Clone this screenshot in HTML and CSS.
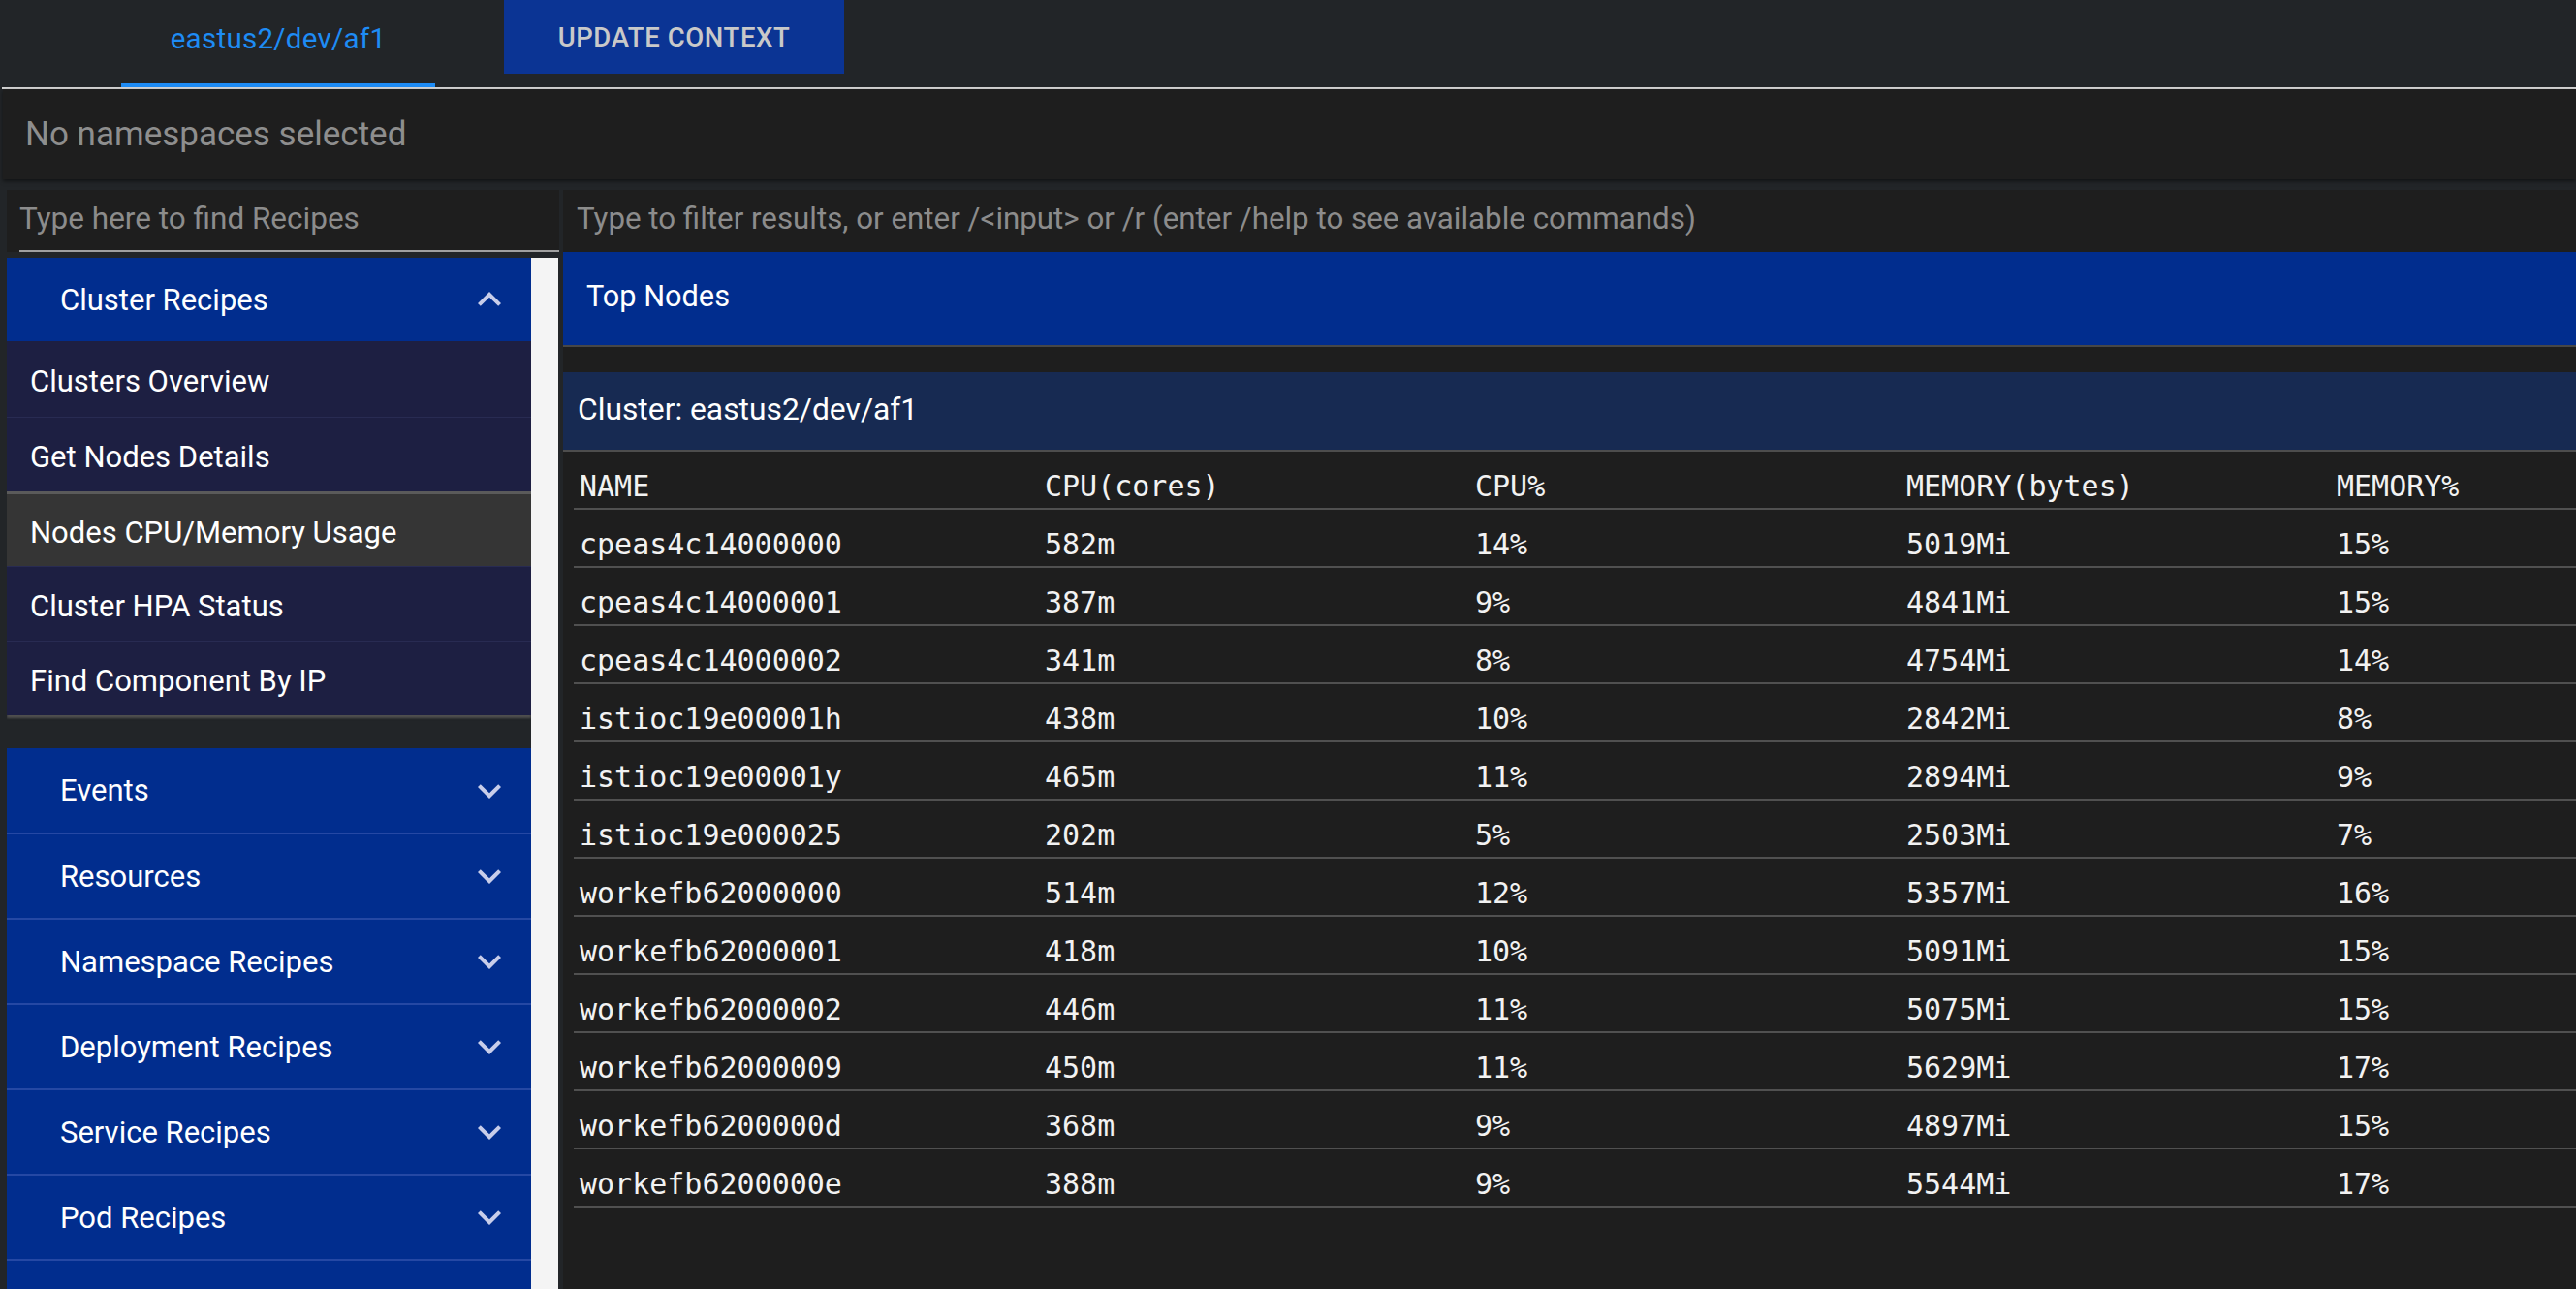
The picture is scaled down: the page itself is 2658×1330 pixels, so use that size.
FILE: index.html
```html
<!DOCTYPE html>
<html lang="en">
<head>
<meta charset="utf-8">
<title>Recipes</title>
<link rel="stylesheet" href="styles.css">
</head>
<body>
<div class="app">
  <header class="topbar">
    <div class="tab active"><span>eastus2/dev/af1</span></div>
    <button class="update">Update context</button>
  </header>

  <div class="ns-panel">No namespaces selected</div>

  <div class="workspace">
    <aside class="sidebar">
      <div class="search"><div class="search-field">Type here to find Recipes</div></div>
      <div class="recipes">
        <div class="recipe-list">
          <section class="group open">
            <div class="group-head">
              <span>Cluster Recipes</span>
              <svg viewBox="0 0 24 24"><path d="M12 8l-6 6 1.41 1.41L12 10.83l4.59 4.58L18 14z"/></svg>
            </div>
            <ul class="items">
              <li class="item first">Clusters Overview</li>
              <li class="item">Get Nodes Details</li>
              <li class="item selected">Nodes CPU/Memory Usage</li>
              <li class="item">Cluster HPA Status</li>
              <li class="item">Find Component By IP</li>
            </ul>
          </section>
          <section class="group">
            <div class="group-head first-closed"><span>Events</span><svg viewBox="0 0 24 24"><path d="M16.59 8.59L12 13.17 7.41 8.59 6 10l6 6 6-6z"/></svg></div>
          </section>
          <section class="group">
            <div class="group-head"><span>Resources</span><svg viewBox="0 0 24 24"><path d="M16.59 8.59L12 13.17 7.41 8.59 6 10l6 6 6-6z"/></svg></div>
          </section>
          <section class="group">
            <div class="group-head"><span>Namespace Recipes</span><svg viewBox="0 0 24 24"><path d="M16.59 8.59L12 13.17 7.41 8.59 6 10l6 6 6-6z"/></svg></div>
          </section>
          <section class="group">
            <div class="group-head"><span>Deployment Recipes</span><svg viewBox="0 0 24 24"><path d="M16.59 8.59L12 13.17 7.41 8.59 6 10l6 6 6-6z"/></svg></div>
          </section>
          <section class="group">
            <div class="group-head"><span>Service Recipes</span><svg viewBox="0 0 24 24"><path d="M16.59 8.59L12 13.17 7.41 8.59 6 10l6 6 6-6z"/></svg></div>
          </section>
          <section class="group">
            <div class="group-head"><span>Pod Recipes</span><svg viewBox="0 0 24 24"><path d="M16.59 8.59L12 13.17 7.41 8.59 6 10l6 6 6-6z"/></svg></div>
          </section>
          <section class="group">
            <div class="group-head"></div>
          </section>
        </div>
        <div class="track"></div>
      </div>
    </aside>

    <main class="content">
      <div class="filter">Type to filter results, or enter /&lt;input&gt; or /r (enter /help to see available commands)</div>
      <div class="title-bar">Top Nodes</div>
      <div class="spacer"></div>
      <div class="cluster-bar">Cluster: eastus2/dev/af1</div>
      <div class="table-wrap">
        <table class="nodes">
          <colgroup>
            <col class="c-name"><col class="c-cpu"><col class="c-cpup"><col class="c-mem"><col>
          </colgroup>
          <thead>
            <tr><th>NAME</th><th>CPU(cores)</th><th>CPU%</th><th>MEMORY(bytes)</th><th>MEMORY%</th></tr>
          </thead>
          <tbody>
            <tr><td>cpeas4c14000000</td><td>582m</td><td>14%</td><td>5019Mi</td><td>15%</td></tr>
            <tr><td>cpeas4c14000001</td><td>387m</td><td>9%</td><td>4841Mi</td><td>15%</td></tr>
            <tr><td>cpeas4c14000002</td><td>341m</td><td>8%</td><td>4754Mi</td><td>14%</td></tr>
            <tr><td>istioc19e00001h</td><td>438m</td><td>10%</td><td>2842Mi</td><td>8%</td></tr>
            <tr><td>istioc19e00001y</td><td>465m</td><td>11%</td><td>2894Mi</td><td>9%</td></tr>
            <tr><td>istioc19e000025</td><td>202m</td><td>5%</td><td>2503Mi</td><td>7%</td></tr>
            <tr><td>workefb62000000</td><td>514m</td><td>12%</td><td>5357Mi</td><td>16%</td></tr>
            <tr><td>workefb62000001</td><td>418m</td><td>10%</td><td>5091Mi</td><td>15%</td></tr>
            <tr><td>workefb62000002</td><td>446m</td><td>11%</td><td>5075Mi</td><td>15%</td></tr>
            <tr><td>workefb62000009</td><td>450m</td><td>11%</td><td>5629Mi</td><td>17%</td></tr>
            <tr><td>workefb6200000d</td><td>368m</td><td>9%</td><td>4897Mi</td><td>15%</td></tr>
            <tr><td>workefb6200000e</td><td>388m</td><td>9%</td><td>5544Mi</td><td>17%</td></tr>
          </tbody>
        </table>
      </div>
    </main>
  </div>
</div>
</body>
</html>
```
FILE: styles.css
```css
* { box-sizing: border-box; }
html, body { margin: 0; padding: 0; height: 100%; }
body {
  background: #222528;
  font-family: Roboto, "Noto Sans", "Liberation Sans", sans-serif;
  color: #fff;
  overflow: hidden;
}
.app { display: flex; flex-direction: column; height: 1330px; }

/* top bar */
.topbar {
  display: flex;
  align-items: flex-start;
  height: 92px;
  margin-left: 2px;
  border-bottom: 2px solid #d4d4d4;
  flex: none;
}
.tab {
  margin-left: 123px;
  width: 324px;
  height: 90px;
  display: flex;
  align-items: center;
  justify-content: center;
  padding-bottom: 6px;
  border-bottom: 4px solid #1e8cf5;
  color: #1e8cf5;
  font-size: 29.5px;
  letter-spacing: 0.3px;
}
.update {
  margin-left: 71px;
  width: 351px;
  height: 76px;
  border: 0;
  background: #0b3494;
  color: #c9c9c9;
  font-family: Roboto, "Noto Sans", sans-serif;
  font-weight: 500;
  font-size: 27.5px;
  letter-spacing: 0.6px;
  text-transform: uppercase;
  padding: 0;
}

/* namespace panel */
.ns-panel {
  flex: none;
  margin-left: 3px;
  height: 93px;
  background: #1e1e1e;
  display: flex;
  align-items: center;
  padding-left: 23px;
  font-size: 35px;
  color: #8e8e8e;
  box-shadow: 0 2px 4px rgba(0, 0, 0, 0.5);
}

.workspace {
  flex: 1;
  display: flex;
  margin-top: 11px;
  min-height: 0;
}

/* sidebar */
.sidebar {
  margin-left: 7px;
  width: 570px;
  display: flex;
  flex-direction: column;
  flex: none;
}
.search {
  height: 64px;
  background: #1e1e1e;
  padding-left: 13px;
  display: flex;
  flex: none;
}
.search-field {
  flex: 1;
  display: flex;
  align-items: center;
  padding-bottom: 3px;
  border-bottom: 2px solid #a0a0a0;
  font-size: 31.5px;
  color: #8c8c8c;
}
.recipes {
  margin-top: 6px;
  flex: 1;
  display: flex;
  min-height: 0;
  overflow: hidden;
}
.recipe-list { width: 541px; flex: none; }
.track { width: 28px; flex: none; background: #f4f4f4; }

.group-head {
  height: 86px;
  display: flex;
  align-items: center;
  justify-content: space-between;
  padding: 0 19px 0 55px;
  background: #012d8e;
  font-size: 31px;
  color: #fff;
}
.group + .group .group-head { border-top: 2px solid #2548a4; height: 88px; }
.group + .group .group-head.first-closed { border-top: 0; height: 87px; }
.group-head svg { width: 48px; height: 48px; fill: #c8cdea; }
.group.open { margin-bottom: 34px; }

.items {
  list-style: none;
  margin: 0;
  padding: 0;
  background: #1d1f42;
  box-shadow: 0 3px 2px #4e4e4e;
}
.item {
  height: 77px;
  display: flex;
  align-items: center;
  padding: 5px 0 0 24px;
  font-size: 31px;
  color: #fff;
  border-top: 1px solid #282b52;
}
.item.first { border-top: 0; height: 78px; }
.item.selected {
  background: #353535;
  border-top: 3px solid #5a5a5a;
}

/* content */
.content {
  flex: 1;
  margin-left: 4px;
  background: #1e1e1e;
  display: flex;
  flex-direction: column;
  min-width: 0;
}
.filter {
  height: 64px;
  flex: none;
  display: flex;
  align-items: center;
  padding: 0 0 6px 14px;
  font-size: 31.3px;
  color: #8c8c8c;
}
.title-bar {
  height: 98px;
  flex: none;
  background: #012d8e;
  border-bottom: 2px solid #474747;
  padding: 0 0 6px 24px;
  display: flex;
  align-items: center;
  font-size: 30.7px;
}
.spacer { height: 26px; flex: none; }
.cluster-bar {
  height: 82px;
  flex: none;
  background: #172a52;
  border-bottom: 2px solid #4d4d4d;
  padding: 0 0 5px 15px;
  display: flex;
  align-items: center;
  font-size: 31.8px;
}
.table-wrap { padding-left: 11px; }
.nodes {
  width: 100%;
  border-collapse: collapse;
  table-layout: fixed;
  font-family: "DejaVu Sans Mono", "Liberation Mono", monospace;
  font-size: 30px;
  color: #f2f2f2;
}
.c-name { width: 480px; }
.c-cpu { width: 444px; }
.c-cpup { width: 445px; }
.c-mem { width: 444px; }
.nodes th, .nodes td {
  text-align: left;
  font-weight: normal;
  padding: 18px 6px 5px;
  line-height: 35px;
  border-bottom: 2px solid #505050;
  white-space: nowrap;
}
```
